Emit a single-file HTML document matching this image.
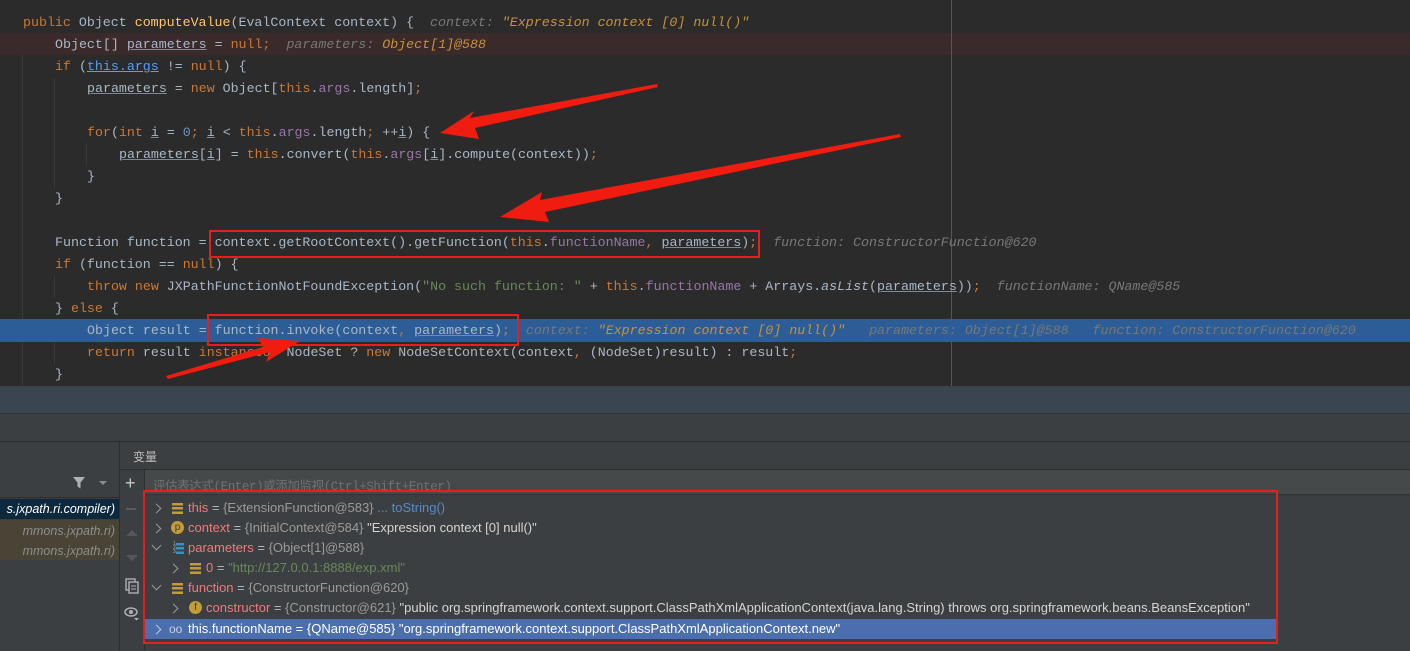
<!DOCTYPE html>
<html><head><meta charset="utf-8"><style>
*{margin:0;padding:0;box-sizing:border-box}
body{width:1410px;height:651px;overflow:hidden;background:#3c3f41;position:relative;font-family:"Liberation Sans","Noto Sans CJK SC",sans-serif}
#code{position:absolute;left:0;top:0;width:1410px;height:386px;background:#2b2b2b;overflow:hidden}
.ln{position:absolute;left:0;height:22px;line-height:23px;white-space:pre;font-family:"Liberation Mono",monospace;font-size:13.3px;color:#a9b7c6;width:1410px}
.k{color:#cc7832}.f{color:#9876aa}.s{color:#6a8759}.n{color:#6897bb}.m{color:#ffc66d}
.u{text-decoration:underline;text-decoration-color:#7a8a9a}
.lk{color:#589df6;text-decoration:underline}
.h{color:#787878;font-style:italic}.hv{color:#c7913b;font-style:italic}
.guide{position:absolute;width:1px;background:#3a3a3a}
.box{position:absolute;border:2px solid #e81e1e}
.row{position:absolute;left:145px;width:1132px;height:20px;line-height:20px;font-size:13px;white-space:nowrap;color:#a9b7c6}
.vn{color:#f07a7a}.vv{color:#9a9a9a}.vs{color:#d4d4d4}
.chev{position:absolute;width:7px;height:7px;border-right:1.5px solid #9a9a9a;border-bottom:1.5px solid #9a9a9a}
.bars{position:absolute;width:11px;height:11px;background:repeating-linear-gradient(#c29c3a 0 2.5px,transparent 2.5px 4.2px)}
</style></head><body>
<div id="code">
<div class="guide" style="left:22px;top:33px;height:353px"></div>
<div class="guide" style="left:54px;top:78px;height:110px"></div>
<div class="guide" style="left:86px;top:143px;height:22px"></div>
<div class="guide" style="left:54px;top:276px;height:22px"></div>
<div class="guide" style="left:54px;top:320px;height:44px"></div>
<div style="position:absolute;left:0;top:33px;width:1410px;height:22px;background:#3b2a2a"></div>
<div style="position:absolute;left:0;top:319px;width:1410px;height:23px;background:#2d5d96"></div>
<div style="position:absolute;left:951px;top:0;width:1px;height:386px;background:#555"></div>

<div class="ln" style="top:11px;padding-left:23px"><span class="k">public </span>Object <span class="m">computeValue</span>(EvalContext context) {  <span class="h">context: </span><span class="hv">"Expression context [0] null()"</span></div>
<div class="ln" style="top:33px;padding-left:55px">Object[] <span class="u">parameters</span> = <span class="k">null;</span>  <span class="h">parameters: </span><span class="hv">Object[1]@588</span></div>
<div class="ln" style="top:55px;padding-left:55px"><span class="k">if </span>(<span class="lk">this.args</span> != <span class="k">null</span>) {</div>
<div class="ln" style="top:77px;padding-left:87px"><span class="u">parameters</span> = <span class="k">new </span>Object[<span class="k">this</span>.<span class="f">args</span>.length]<span class="k">;</span></div>
<div class="ln" style="top:121px;padding-left:87px"><span class="k">for</span>(<span class="k">int </span><span class="u">i</span> = <span class="n">0</span><span class="k">; </span><span class="u">i</span> &lt; <span class="k">this</span>.<span class="f">args</span>.length<span class="k">; </span>++<span class="u">i</span>) {</div>
<div class="ln" style="top:143px;padding-left:119px"><span class="u">parameters</span>[<span class="u">i</span>] = <span class="k">this</span>.convert(<span class="k">this</span>.<span class="f">args</span>[<span class="u">i</span>].compute(context))<span class="k">;</span></div>
<div class="ln" style="top:165px;padding-left:87px">}</div>
<div class="ln" style="top:187px;padding-left:55px">}</div>
<div class="ln" style="top:231px;padding-left:55px">Function function = context.getRootContext().getFunction(<span class="k">this</span>.<span class="f">functionName</span><span class="k">, </span><span class="u">parameters</span>)<span class="k">;</span>  <span class="h">function: ConstructorFunction@620</span></div>
<div class="ln" style="top:253px;padding-left:55px"><span class="k">if </span>(function == <span class="k">null</span>) {</div>
<div class="ln" style="top:275px;padding-left:87px"><span class="k">throw new </span>JXPathFunctionNotFoundException(<span class="s">"No such function: "</span> + <span class="k">this</span>.<span class="f">functionName</span> + Arrays.<i>asList</i>(<span class="u">parameters</span>))<span class="k">;</span>  <span class="h">functionName: QName@585</span></div>
<div class="ln" style="top:297px;padding-left:55px">} <span class="k">else </span>{</div>
<div class="ln" style="top:319px;padding-left:87px">Object result = function.invoke(context<span class="k">, </span><span class="u">parameters</span>)<span class="k">;</span>  <span class="h">context: </span><span class="hv">"Expression context [0] null()"</span>   <span class="h">parameters: Object[1]@588   function: ConstructorFunction@620</span></div>
<div class="ln" style="top:341px;padding-left:87px"><span class="k">return </span>result <span class="k">instanceof </span>NodeSet ? <span class="k">new </span>NodeSetContext(context<span class="k">, </span>(NodeSet)result) : result<span class="k">;</span></div>
<div class="ln" style="top:363px;padding-left:55px">}</div>

<div class="box" style="left:209px;top:230px;width:551px;height:28px"></div>
<div class="box" style="left:207px;top:314px;width:312px;height:32px"></div>
</div>

<div style="position:absolute;left:0;top:386px;width:1410px;height:27px;background:#3b4552"></div>
<div style="position:absolute;left:0;top:413px;width:1410px;height:28px;background:#3c3f41;border-top:1px solid #323232"></div>
<div style="position:absolute;left:0;top:441px;width:1410px;height:1px;background:#2b2b2b"></div>
<div style="position:absolute;left:119px;top:442px;width:1px;height:209px;background:#2e2e2e"></div>
<div style="position:absolute;left:133px;top:448px;font-size:12px;color:#bbb">变量</div>
<div style="position:absolute;left:120px;top:469px;width:1290px;height:1px;background:#2e2e2e"></div>
<div style="position:absolute;left:0;top:497px;width:119px;height:1px;background:#2e2e2e"></div>
<svg style="position:absolute;left:72px;top:476px" width="40" height="14"><path d="M1 1h12l-4.5 5.5v6l-3-2v-4z" fill="#afb1b3"/><path d="M27 5h8l-4 4z" fill="#8a8c8e"/></svg>
<div style="position:absolute;left:0;top:499px;width:119px;height:20px;background:#0d293e;color:#fff;font-style:italic;font-size:12.5px;line-height:20px;white-space:nowrap;text-align:right;padding-right:4px;overflow:hidden">s.jxpath.ri.compiler)</div>
<div style="position:absolute;left:0;top:520px;width:119px;height:40px;background:#4a4437"></div>
<div style="position:absolute;left:0;top:521px;width:115px;color:#8e8e8e;font-style:italic;font-size:12.5px;line-height:20px;white-space:nowrap;overflow:hidden;text-align:right">mmons.jxpath.ri)<br>mmons.jxpath.ri)</div>
<div style="position:absolute;left:144px;top:470px;width:1px;height:181px;background:#2e2e2e"></div>
<div style="position:absolute;left:125px;top:474px;color:#c8c8c8;font-size:18px;line-height:18px">+</div>
<div style="position:absolute;left:126px;top:508px;width:10px;height:2px;background:#5a5d5f"></div>
<svg style="position:absolute;left:125px;top:528px" width="14" height="40"><path d="M1 8l6-6 6 6z" fill="#55585a"/><path d="M1 27h12l-6 6z" fill="#55585a"/></svg>
<svg style="position:absolute;left:125px;top:578px" width="14" height="16"><rect x="1" y="1" width="9" height="11" fill="none" stroke="#afb1b3" stroke-width="1.4"/><rect x="4" y="4" width="9" height="11" fill="#3c3f41" stroke="#afb1b3" stroke-width="1.4"/><path d="M6 8h5M6 11h5" stroke="#afb1b3"/></svg>
<svg style="position:absolute;left:124px;top:606px" width="16" height="16"><ellipse cx="7" cy="6" rx="6" ry="4" fill="none" stroke="#afb1b3" stroke-width="1.5"/><circle cx="7" cy="6" r="2" fill="#afb1b3"/><path d="M10 12h5l-2.5 2.5z" fill="#afb1b3"/></svg>
<div style="position:absolute;left:145px;top:470px;width:1265px;height:25px;background:#45494a;border-bottom:1px solid #323232"></div>
<div style="position:absolute;left:153px;top:475px;font-size:12.5px;color:#6f7274;font-family:'Liberation Mono','Noto Sans CJK SC',monospace;white-space:nowrap;letter-spacing:-0.4px">评估表达式(Enter)或添加监视(Ctrl+Shift+Enter)</div>

<div style="position:absolute;left:145px;top:619px;width:1132px;height:20px;background:#4b6eaf"></div>
<div class="row" style="top:498px"><div class="chev" style="left:8px;top:7px;transform:rotate(-45deg)"></div><div class="bars" style="left:27px;top:5px"></div><span style="position:absolute;left:43px"><span class="vn">this</span> = <span class="vv">{ExtensionFunction@583}</span> <span style="color:#5a8ac6">... toString()</span></span></div>
<div class="row" style="top:518px"><div class="chev" style="left:8px;top:7px;transform:rotate(-45deg)"></div><div style="position:absolute;left:26px;top:3px;width:13px;height:13px;border-radius:50%;background:#c29c3a;color:#3c3f41;font-size:10px;line-height:13px;text-align:center">p</div><span style="position:absolute;left:43px"><span class="vn">context</span> = <span class="vv">{InitialContext@584}</span> <span class="vs">"Expression context [0] null()"</span></span></div>
<div class="row" style="top:538px"><div class="chev" style="left:8px;top:4px;transform:rotate(45deg)"></div><div style="position:absolute;left:28px;top:4px;font-size:5px;line-height:4px;color:#aaa">1<br>2<br>3</div><div class="bars" style="left:31px;top:5px;width:8px;background:repeating-linear-gradient(#3592c4 0 2.5px,transparent 2.5px 4.2px)"></div><span style="position:absolute;left:43px"><span class="vn">parameters</span> = <span class="vv">{Object[1]@588}</span></span></div>
<div class="row" style="top:558px"><div class="chev" style="left:25px;top:7px;transform:rotate(-45deg)"></div><div class="bars" style="left:45px;top:5px"></div><span style="position:absolute;left:61px"><span class="vn">0</span> = <span style="color:#6a8759">"http://127.0.0.1:8888/exp.xml"</span></span></div>
<div class="row" style="top:578px"><div class="chev" style="left:8px;top:4px;transform:rotate(45deg)"></div><div class="bars" style="left:27px;top:5px"></div><span style="position:absolute;left:43px"><span class="vn">function</span> = <span class="vv">{ConstructorFunction@620}</span></span></div>
<div class="row" style="top:598px"><div class="chev" style="left:25px;top:7px;transform:rotate(-45deg)"></div><div style="position:absolute;left:44px;top:3px;width:13px;height:13px;border-radius:50%;background:#c29c3a;color:#3c3f41;font-size:10px;line-height:13px;text-align:center">f</div><span style="position:absolute;left:61px"><span class="vn">constructor</span> = <span class="vv">{Constructor@621}</span> <span class="vs">"public org.springframework.context.support.ClassPathXmlApplicationContext(java.lang.String) throws org.springframework.beans.BeansException"</span></span></div>
<div class="row" style="top:619px"><div class="chev" style="left:8px;top:7px;transform:rotate(-45deg);border-color:#c0c8d8"></div><span style="position:absolute;left:24px;color:#c8d0e0;font-size:12px">oo</span><span style="position:absolute;left:43px;color:#fff">this.functionName = {QName@585} "org.springframework.context.support.ClassPathXmlApplicationContext.new"</span></div>
<div class="box" style="left:143px;top:490px;width:1135px;height:154px"></div>

<svg style="position:absolute;left:0;top:0" width="1410" height="651">
<polygon points="657,84 470,118 474,111 440,133 479,139 475,128 658,87" fill="#f01c10"/>
<polygon points="900,134 540,200 542,192 500,217 549,222 545,212 901,137" fill="#f01c10"/>
<polygon points="168,379 270,352 266,362 300,341 258,338 263,347 166,376" fill="#f01c10"/>
</svg>
</body></html>
